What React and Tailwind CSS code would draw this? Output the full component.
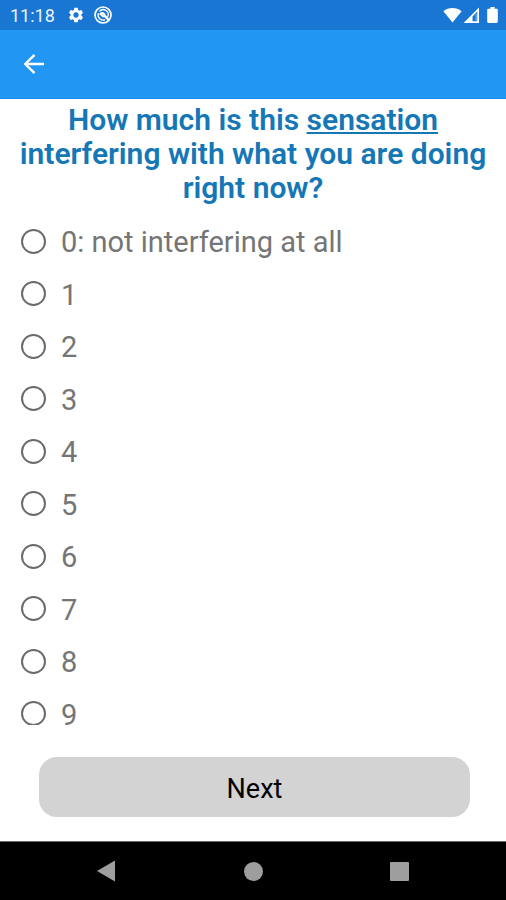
import { useState } from 'react'

const options = ['0: not interfering at all', '1', '2', '3', '4', '5', '6', '7', '8', '9']

const StatusBar = () => (
  <div className="flex h-[30px] shrink-0 items-center bg-[#1976d2] pl-[10px] pr-2 text-white">
    <span className="pt-px text-[18px] leading-[30px] text-[#e8f1fb]">11:18</span>

    <svg className="ml-[12px] h-[18px] w-[18px]" viewBox="0 0 24 24" fill="currentColor">
      <path d="M19.14 12.94c.04-.3.06-.61.06-.94 0-.32-.02-.64-.07-.94l2.03-1.58c.18-.14.23-.41.12-.61l-1.92-3.32c-.12-.22-.37-.29-.59-.22l-2.39.96c-.5-.38-1.03-.7-1.62-.94l-.36-2.54c-.04-.24-.24-.41-.48-.41h-3.84c-.24 0-.43.17-.47.41l-.36 2.54c-.59.24-1.13.57-1.62.94l-2.39-.96c-.22-.08-.47 0-.59.22L2.74 8.87c-.12.21-.08.47.12.61l2.03 1.58c-.05.3-.09.63-.09.94s.02.64.07.94l-2.03 1.58c-.18.14-.23.41-.12.61l1.92 3.32c.12.22.37.29.59.22l2.39-.96c.5.38 1.03.7 1.62.94l.36 2.54c.05.24.24.41.48.41h3.84c.24 0 .44-.17.47-.41l.36-2.54c.59-.24 1.13-.56 1.62-.94l2.39.96c.22.08.47 0 .59-.22l1.92-3.32c.12-.22.07-.47-.12-.61l-2.01-1.58zM12 15.6c-1.98 0-3.6-1.62-3.6-3.6s1.62-3.6 3.6-3.6 3.6 1.62 3.6 3.6-1.62 3.6-3.6 3.6z" />
    </svg>

    <svg className="ml-[9px] h-[18px] w-[18px]" viewBox="0 0 18 18" fill="none" stroke="currentColor">
      <circle cx="9" cy="9" r="8" strokeWidth="1.7" />
      <path strokeWidth="1.3" d="M5.4 5.4A5 5 0 0 1 13.6 11M11 13.6A5 5 0 0 1 4.4 7.2" />
      <path strokeWidth="2.4" strokeLinecap="round" d="M6.6 8A2.2 2.2 0 0 1 10.4 9.4l4 4.4" />
      <path strokeWidth="1.6" strokeLinecap="round" d="M6.6 8.4l2.6 2.2" />
    </svg>

    <svg className="ml-auto h-[18px] w-[19px]" viewBox="0 0 19 18" fill="currentColor">
      <path d="M.4 5.2C5.6.8 13.4.8 18.6 5.2L9.5 16.4z" />
    </svg>
    <svg className="ml-px h-[18px] w-[17px]" viewBox="0 0 17 18">
      <path fill="currentColor" fillRule="evenodd" d="M16 1.5V17H.6zM14.3 5.6L9.5 10.6V15.2H14.3z" />
      <path fill="#fff" fillOpacity=".3" d="M12.4 8h1.9v7.2h-1.9z" />
    </svg>
    <svg className="ml-[7px] h-[18px] w-[11px]" viewBox="0 0 11 18" fill="currentColor">
      <path d="M3.4 1h4.2v1.8h1.9c.8 0 1.3.5 1.3 1.2v11.6c0 .8-.5 1.3-1.3 1.3h-8c-.8 0-1.3-.5-1.3-1.3V4c0-.7.5-1.2 1.3-1.2h1.9z" />
    </svg>
  </div>
)

const AppBar = () => (
  <header className="flex h-[69px] shrink-0 items-center border-b border-[#1a86f0] bg-[#2196f3] px-[22px]">
    <button type="button" aria-label="Back" className="text-white">
      <svg className="h-6 w-6" viewBox="0 0 24 24" fill="none" stroke="currentColor" strokeWidth="2.4">
        <path d="M22 12H4M12.5 2.8L3.3 12l9.2 9.2" />
      </svg>
    </button>
  </header>
)

const NavBar = () => (
  <nav className="grid h-[59px] shrink-0 grid-cols-[1fr_80px_1fr] items-center border-t border-[#6b6b6b] bg-black">
    <button type="button" aria-label="Back" className="justify-self-center">
      <svg className="h-[22px] w-[20px]" viewBox="0 0 20 22" fill="#9e9e9e">
        <path d="M18 .5v21L0 11z" />
      </svg>
    </button>
    <button type="button" aria-label="Home" className="h-[19px] w-[19px] justify-self-center rounded-full bg-[#9e9e9e]" />
    <button type="button" aria-label="Recent apps" className="h-[19px] w-[19px] justify-self-center rounded-[1px] bg-[#9e9e9e]" />
  </nav>
)

const App = () => {
  const [selected, setSelected] = useState(null)

  return (
    <div className="flex h-screen flex-col bg-white font-['Roboto',sans-serif]">
      <StatusBar />
      <AppBar />

      {/* Question, scrolls when the list is longer than the screen */}
      <main className="min-h-0 flex-1 overflow-y-auto pt-1 [scrollbar-width:none]">
        <h1 id="question" className="px-4 text-center text-[30px] leading-[34px] font-semibold text-[#1577b5]">
          How much is this{' '}
          <a href="#sensation" className="underline decoration-2 underline-offset-2">sensation</a>{' '}
          interfering with what you are doing right now?
        </h1>

        <div role="radiogroup" aria-labelledby="question" className="mt-[10px]">
          {options.map((label, i) => (
            <label
              key={label}
              className="flex items-center pl-[21px] text-[29px] text-[#757575] odd:h-[52px] even:h-[53px]"
            >
              <input
                type="radio"
                name="interference"
                value={i}
                checked={selected === i}
                onChange={() => setSelected(i)}
                className="mr-[15px] h-[25px] w-[25px] shrink-0 appearance-none rounded-full border-2 border-[#6b6b6b] checked:border-[7px] checked:border-[#2196f3]"
              />
              <span className="pt-1">{label}</span>
            </label>
          ))}
        </div>
      </main>

      <div className="shrink-0 pt-8 pr-9 pb-6 pl-[39px]">
        <button type="button" className="h-[60px] w-full rounded-[18px] bg-[#d3d3d3] pt-1 text-[27px] text-black">
          Next
        </button>
      </div>

      <NavBar />
    </div>
  )
}

export default App
